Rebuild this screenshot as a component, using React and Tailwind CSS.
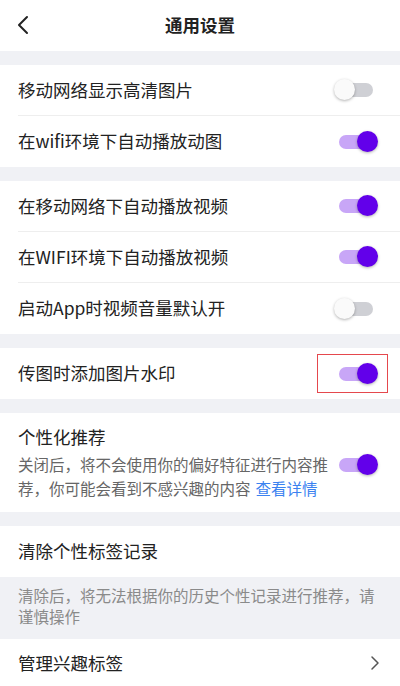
import React from 'react';

const FONT = { fontFamily: '"Noto Sans CJK SC", "Noto Sans", sans-serif' };

const Toggle = ({ on }) => (
  <span className="relative block h-[22px] w-[44px] shrink-0">
    <span
      className={`absolute left-[5px] top-[4px] h-[14px] w-[34px] rounded-full ${
        on ? 'bg-[#c8a6f7]' : 'bg-[#cfd0d5]'
      }`}
    />
    <span
      className={`absolute top-0 h-[21px] w-[21px] rounded-full shadow-[0_1px_3px_rgba(0,0,0,0.3)] ${
        on ? 'right-0 bg-[#6200ea]' : 'left-0 bg-[#fafafa]'
      }`}
    />
  </span>
);

const Gap = () => <div className="h-[14px] bg-[#f0f1f5]" />;

const Row = ({ label, on, last, boxed }) => (
  <div className="bg-white pl-[18px]">
    <div className={`flex h-[51px] items-center justify-between pr-[22px] ${last ? '' : 'border-b border-[#eeeeee]'}`}>
      <span className="text-[17.5px] text-[#222]">{label}</span>
      {boxed ? (
        <span className="-mr-[10px] flex h-[39px] w-[71px] items-center justify-end border border-[#e5484d] pr-[9px]">
          <Toggle on={on} />
        </span>
      ) : (
        <Toggle on={on} />
      )}
    </div>
  </div>
);

export default function App() {
  return (
    <div className="min-h-[686px] bg-white" style={FONT}>
      <header className="relative flex h-[51px] items-center justify-center bg-white">
        <svg className="absolute left-[15px] top-[15px]" width="16" height="20" viewBox="0 0 16 20" fill="none">
          <path d="M12 2 L4 10 L12 18" stroke="#222" strokeWidth="2" strokeLinecap="round" strokeLinejoin="round" />
        </svg>
        <h1 className="text-[17.5px] font-bold text-[#222]">通用设置</h1>
      </header>

      <Gap />
      <Row label="移动网络显示高清图片" on={false} />
      <Row label="在wifi环境下自动播放动图" on last />

      <Gap />
      <Row label="在移动网络下自动播放视频" on />
      <Row label="在WIFI环境下自动播放视频" on />
      <Row label="启动App时视频音量默认开" on={false} last />

      <Gap />
      <Row label="传图时添加图片水印" on boxed last />

      <Gap />
      <div className="flex items-center justify-between bg-white pb-[12px] pl-[18px] pr-[22px] pt-[11px]">
        <div className="w-[312px]">
          <p className="text-[17.5px] leading-[26px] text-[#222]">个性化推荐</p>
          <div className="mt-[2px] text-[15.5px] leading-[24px] text-[#666]">
            <p className="whitespace-nowrap">关闭后，将不会使用你的偏好特征进行内容推</p>
            <p className="flex gap-[5px] whitespace-nowrap">
              <span>荐，你可能会看到不感兴趣的内容</span>
              <span className="text-[#3b82f0]">查看详情</span>
            </p>
          </div>
        </div>
        <span className="mt-[6px]">
          <Toggle on />
        </span>
      </div>

      <Gap />
      <div className="flex h-[51px] items-center bg-white pl-[18px]">
        <span className="text-[17.5px] text-[#222]">清除个性标签记录</span>
      </div>
      <div className="bg-[#f0f1f5] px-[18px] pb-[12px] pt-[8px]">
        <p className="text-[15.5px] leading-[21px] text-[#8a8a8a]">
          清除后，将无法根据你的历史个性记录进行推荐，请谨慎操作
        </p>
      </div>
      <div className="flex h-[49px] items-center justify-between border-b border-[#e6e6e6] bg-white pl-[18px] pr-[20px]">
        <span className="text-[17.5px] text-[#222]">管理兴趣标签</span>
        <svg width="10" height="16" viewBox="0 0 10 16" fill="none">
          <path d="M2 2 L8 8 L2 14" stroke="#555" strokeWidth="1.5" strokeLinecap="round" strokeLinejoin="round" />
        </svg>
      </div>
    </div>
  );
}
